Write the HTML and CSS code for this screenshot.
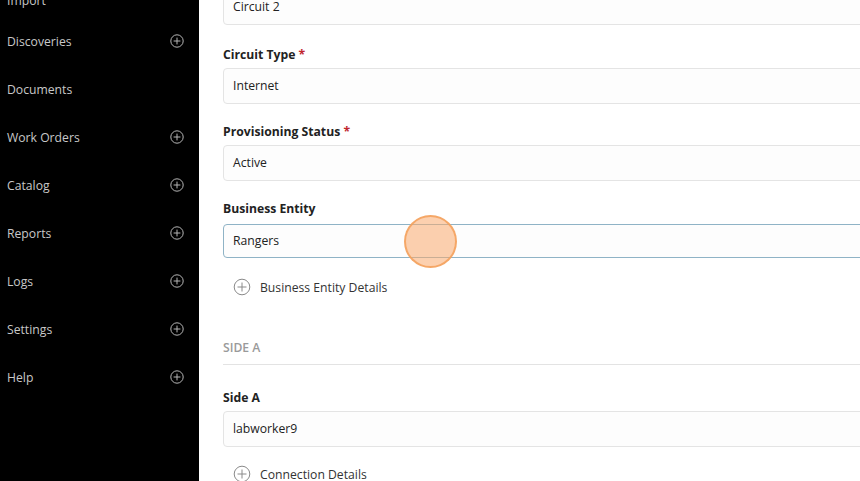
FILE: index.html
```
<!DOCTYPE html>
<html>
<head>
<meta charset="utf-8">
<link rel="stylesheet" href="styles.css">
</head>
<body>
<div class="app">
  <nav class="sidebar">
    <div class="nav-item first"><span>Import</span></div>
    <div class="nav-item"><span>Discoveries</span><svg class="nav-plus" viewBox="0 0 14 14"><circle cx="7" cy="7" r="6.2"/><path d="M7 3.6v6.8M3.6 7h6.8"/></svg></div>
    <div class="nav-item"><span>Documents</span></div>
    <div class="nav-item"><span>Work Orders</span><svg class="nav-plus" viewBox="0 0 14 14"><circle cx="7" cy="7" r="6.2"/><path d="M7 3.6v6.8M3.6 7h6.8"/></svg></div>
    <div class="nav-item"><span>Catalog</span><svg class="nav-plus" viewBox="0 0 14 14"><circle cx="7" cy="7" r="6.2"/><path d="M7 3.6v6.8M3.6 7h6.8"/></svg></div>
    <div class="nav-item"><span>Reports</span><svg class="nav-plus" viewBox="0 0 14 14"><circle cx="7" cy="7" r="6.2"/><path d="M7 3.6v6.8M3.6 7h6.8"/></svg></div>
    <div class="nav-item"><span>Logs</span><svg class="nav-plus" viewBox="0 0 14 14"><circle cx="7" cy="7" r="6.2"/><path d="M7 3.6v6.8M3.6 7h6.8"/></svg></div>
    <div class="nav-item"><span>Settings</span><svg class="nav-plus" viewBox="0 0 14 14"><circle cx="7" cy="7" r="6.2"/><path d="M7 3.6v6.8M3.6 7h6.8"/></svg></div>
    <div class="nav-item"><span>Help</span><svg class="nav-plus" viewBox="0 0 14 14"><circle cx="7" cy="7" r="6.2"/><path d="M7 3.6v6.8M3.6 7h6.8"/></svg></div>
  </nav>
  <main class="main">
    <div class="form">
      <div class="field first">
        <div class="input">Circuit 2</div>
      </div>
      <div class="field">
        <div class="label">Circuit Type <span class="req">*</span></div>
        <div class="input">Internet</div>
      </div>
      <div class="field">
        <div class="label">Provisioning Status <span class="req">*</span></div>
        <div class="input">Active</div>
      </div>
      <div class="field">
        <div class="label">Business Entity</div>
        <div class="input focused">Rangers<span class="cursor-dot"></span></div>
      </div>
      <div class="details"><svg class="detail-plus" viewBox="0 0 18 18"><circle cx="9" cy="9" r="7.8"/><path d="M9 4.5v9M4.5 9h9"/></svg><span>Business Entity Details</span></div>
      <div class="section">SIDE A</div>
      <div class="field">
        <div class="label">Side A</div>
        <div class="input">labworker9</div>
      </div>
      <div class="details last"><svg class="detail-plus" viewBox="0 0 18 18"><circle cx="9" cy="9" r="7.8"/><path d="M9 4.5v9M4.5 9h9"/></svg><span>Connection Details</span></div>
    </div>
  </main>
</div>
</body>
</html>
```
FILE: styles.css
```
* { box-sizing: border-box; }
html, body { margin: 0; padding: 0; height: 100%; overflow: hidden; }
body { font-family: "Open Sans", "Noto Sans", sans-serif; font-size: 12.2px; color: #222; background: #fff; }
.app { display: flex; height: 481px; overflow: hidden; }
.sidebar { width: 199px; flex: none; background: #000; display: flex; flex-direction: column; margin-top: -17px; height: calc(100% + 17px); }
.nav-item { height: 48px; flex: none; display: flex; align-items: center; justify-content: space-between; padding: 0 15px 0 7px; color: #c8c8c8; font-size: 12.2px; }
.nav-item.first { height: 34px; }
.nav-plus { width: 14px; height: 14px; fill: none; stroke: #b5b5b5; stroke-width: 1; }
.main { flex: 1; overflow: hidden; background: #fff; }
.form { width: 720px; margin: -11px 0 0 24px; display: flex; flex-direction: column; }
.field { display: flex; flex-direction: column; margin-bottom: 18px; }
.field.first { margin-bottom: 20px; }
.label { height: 20px; line-height: 20px; font-weight: 700; color: #222; margin-bottom: 3px; }
.req { color: #c0262d; }
.input { height: 36px; border: 1px solid #e4e4e4; border-radius: 4px; background: #fdfdfd; padding: 0 9px; line-height: 34px; color: #222; position: relative; }
.input.focused { border-color: #8fb3c6; height: 34px; margin-top: 2px; line-height: 32px; }
.cursor-dot { position: absolute; left: 180px; top: 50%; width: 53px; height: 53px; margin-top: -26px; border-radius: 50%; background: rgba(250, 170, 110, 0.55); border: 2px solid rgba(245, 160, 90, 0.85); }
.details { display: flex; align-items: center; gap: 9px; height: 20px; margin: 1px 0 0 10px; color: #333; }
.details.last { margin-top: -1px; }
.detail-plus { width: 18px; height: 18px; fill: none; stroke: #8a8a8a; stroke-width: 1; }
.section { margin-top: 41px; line-height: 20px; color: #9a9a9a; font-weight: 600; border-bottom: 1px solid #e3e3e3; margin-bottom: 23px; padding-bottom: 6px; }
```
